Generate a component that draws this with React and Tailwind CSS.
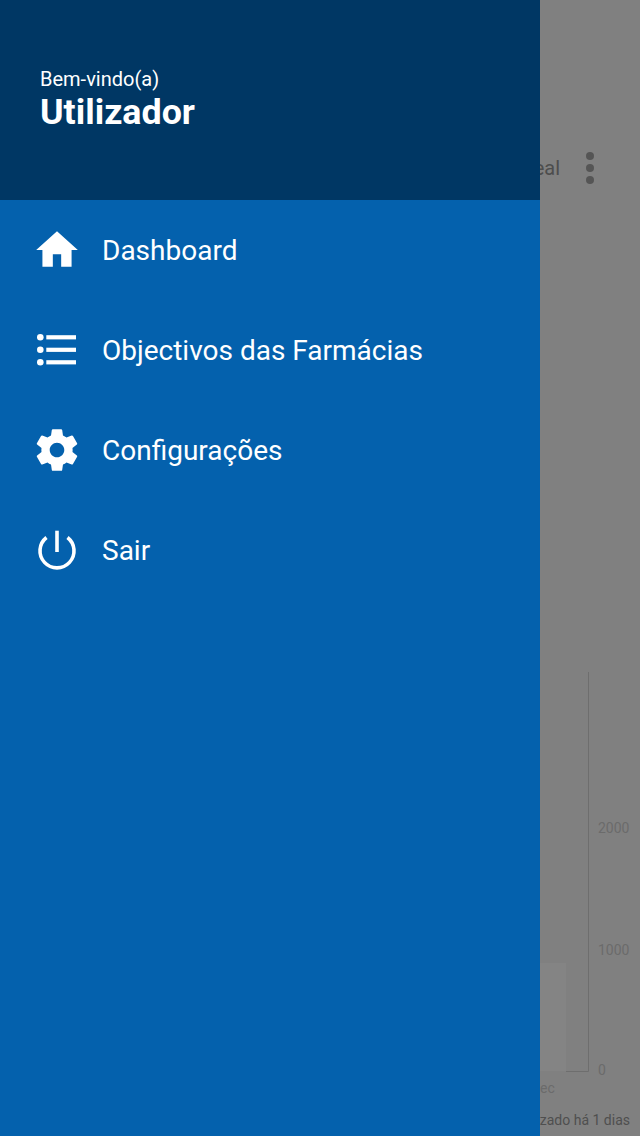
const items = [
  {
    label: "Dashboard",
    icon: <path d="M20.83 41.67V29.17h8.34v12.5h10.41V25H45.83L25 6.25 4.17 25h6.25v16.67z" fill="white" />,
  },
  {
    label: "Objectivos das Farmácias",
    icon: (
      <g fill="white">
        <circle cx="8.3" cy="12.3" r="3.3" />
        <circle cx="8.3" cy="24.8" r="3.3" />
        <circle cx="8.3" cy="37.3" r="3.3" />
        <rect x="14.3" y="10.2" width="29.7" height="4.2" />
        <rect x="14.3" y="22.7" width="29.7" height="4.2" />
        <rect x="14.3" y="35.2" width="29.7" height="4.2" />
      </g>
    ),
  },
  {
    label: "Configurações",
    icon: (
      <g transform="scale(2.0833)">
        <path
          fill="white"
          d="M19.43 12.98c.04-.32.07-.64.07-.98s-.03-.66-.07-.98l2.11-1.65c.19-.15.24-.42.12-.64l-2-3.46c-.12-.22-.39-.3-.61-.22l-2.49 1c-.52-.4-1.08-.73-1.69-.98l-.38-2.65C14.46 2.18 14.25 2 14 2h-4c-.25 0-.46.18-.49.42l-.38 2.65c-.61.25-1.17.59-1.69.98l-2.49-1c-.23-.09-.49 0-.61.22l-2 3.46c-.13.22-.07.49.12.64l2.11 1.65c-.04.32-.07.65-.07.98s.03.66.07.98l-2.11 1.65c-.19.15-.24.42-.12.64l2 3.46c.12.22.39.3.61.22l2.49-1c.52.4 1.08.73 1.69.98l.38 2.65c.03.24.24.42.49.42h4c.25 0 .46-.18.49-.42l.38-2.65c.61-.25 1.17-.59 1.69-.98l2.49 1c.23.09.49 0 .61-.22l2-3.46c.12-.22.07-.49-.12-.64l-2.11-1.65zM12 15.5c-1.93 0-3.5-1.57-3.5-3.5s1.57-3.5 3.5-3.5 3.5 1.57 3.5 3.5-1.57 3.5-3.5 3.5z"
        />
      </g>
    ),
  },
  {
    label: "Sair",
    icon: (
      <g fill="none" stroke="white" strokeWidth="3.6">
        <path d="M14.5 12.5A17 17 0 1 0 35.5 12.5" />
        <path d="M25 5.7V27" />
      </g>
    ),
  },
];

export default function App() {
  return (
    <div className="flex h-[1136px] w-[640px] overflow-hidden bg-[#808080] font-['Roboto',sans-serif]">
      <div className="flex w-[540px] shrink-0 flex-col bg-[#0461ad]">
        <div className="flex h-[200px] flex-col bg-[#003764] px-10 pt-[67px] text-white">
          <div className="text-[20px] leading-[24px]">Bem-vindo(a)</div>
          <div className="mt-px text-[35.8px] font-bold leading-[40px]">Utilizador</div>
        </div>
        <nav className="flex flex-col">
          {items.map((it) => (
            <div key={it.label} className="flex h-[100px] items-center gap-5 pl-8 text-white">
              <svg viewBox="0 0 50 50" className="h-[50px] w-[50px] shrink-0">
                {it.icon}
              </svg>
              <span className="pt-[2px] text-[28px] leading-[32px]">{it.label}</span>
            </div>
          ))}
        </nav>
      </div>
      <div className="flex w-[100px] shrink-0 flex-col overflow-hidden">
        <div className="mt-[152px] flex h-8 items-center">
          <div className="flex w-[20px] shrink-0 justify-end whitespace-nowrap text-[20px] text-[#4d4d4d]">
            Real
          </div>
          <div className="ml-[26px] flex flex-col gap-[4px]">
            <span className="h-2 w-2 rounded-full bg-[#555555]" />
            <span className="h-2 w-2 rounded-full bg-[#555555]" />
            <span className="h-2 w-2 rounded-full bg-[#555555]" />
          </div>
        </div>
        <svg viewBox="0 0 100 430" className="mt-[488px] h-[430px] w-[100px] shrink-0">
          <rect x="0" y="291" width="26" height="108" fill="#848484" />
          <path d="M48.5 0V399.5H26" fill="none" stroke="#6e6e6e" strokeWidth="1" />
          <g fill="#6b6b6b" fontSize="14" fontFamily="Roboto, sans-serif">
            <text x="58" y="161">2000</text>
            <text x="58" y="282.5">1000</text>
            <text x="58" y="403">0</text>
            <text x="0" y="421">ec</text>
          </g>
        </svg>
        <div className="mt-[8px] flex h-5 items-center justify-end whitespace-nowrap pr-[10px] text-[14px] text-[#4f4f4f]">
          Actualizado há 1 dias
        </div>
      </div>
    </div>
  );
}
